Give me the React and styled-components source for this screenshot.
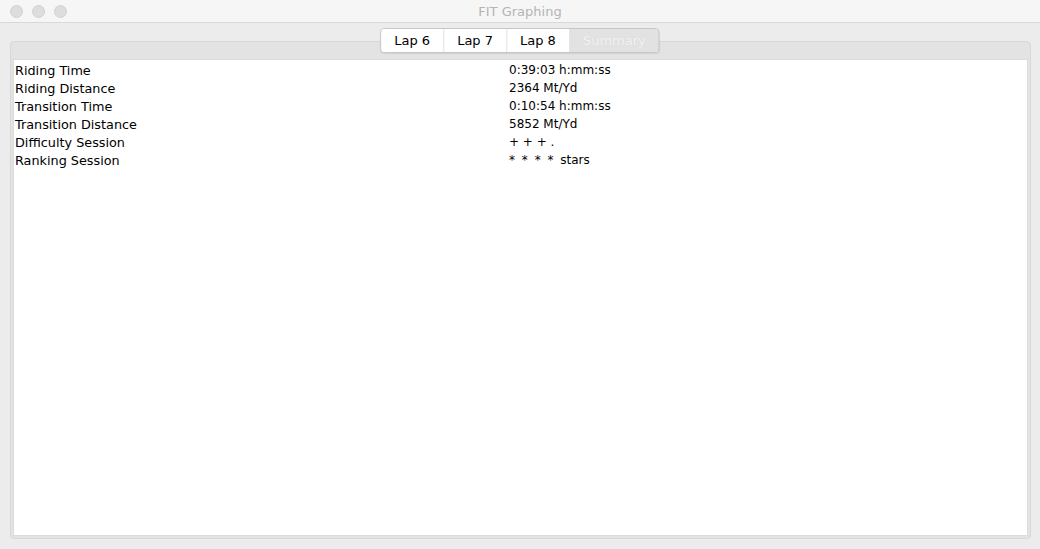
import React, { useState } from "react";
import styled, { createGlobalStyle } from "styled-components";

const GlobalStyle = createGlobalStyle`
	html, body {
		margin: 0;
		padding: 0;
		background: #ececec;
	}
	body {
		font-family: "DejaVu Sans", "Liberation Sans", sans-serif;
	}
`;

const rows = [
	["Riding Time", "0:39:03 h:mm:ss"],
	["Riding Distance", "2364 Mt/Yd"],
	["Transition Time", "0:10:54 h:mm:ss"],
	["Transition Distance", "5852 Mt/Yd"],
	["Difficulty Session", "+ + + ."],
	["Ranking Session", "* * * * stars"],
];

const tabs = ["Lap 6", "Lap 7", "Lap 8", "Summary"];

const App = () => {
	const [activeTab, setActiveTab] = useState(3);

	return (
		<>
			<GlobalStyle />
			<Window>
				<TitleBar>
					<Lights>
						<Light />
						<Light />
						<Light />
					</Lights>
					<Title>FIT Graphing</Title>
				</TitleBar>
				<Body>
					<TabStrip>
						{tabs.map((t, i) => (
							<Tab
								key={t}
								$active={activeTab === i}
								onClick={() => setActiveTab(i)}
							>
								{t}
							</Tab>
						))}
					</TabStrip>
					<Pane>
						<PaneHead />
						<Content>
							{rows.map(([label, value]) => (
								<Row key={label}>
									<Label>{label}</Label>
									<Value $stars={value.startsWith("*")}>{value}</Value>
								</Row>
							))}
						</Content>
					</Pane>
				</Body>
			</Window>
		</>
	);
};

const Window = styled.div`
	width: 1040px;
	height: 549px;
	display: flex;
	flex-direction: column;
	background: #ececec;
	overflow: hidden;
`;

const TitleBar = styled.div`
	height: 23px;
	flex-shrink: 0;
	position: relative;
	display: flex;
	align-items: center;
	background: #f6f6f6;
	border-bottom: 1px solid #d9d9d9;
	box-sizing: border-box;
`;

const Lights = styled.div`
	display: flex;
	gap: 9px;
	padding-left: 10px;
	padding-top: 1px;
`;

const Light = styled.div`
	width: 13px;
	height: 13px;
	border-radius: 50%;
	background: #dddddd;
	border: 1px solid #d2d2d2;
	box-sizing: border-box;
`;

const Title = styled.div`
	position: absolute;
	left: 0;
	right: 0;
	text-align: center;
	font-size: 13px;
	color: #b4b4b4;
`;

const Body = styled.div`
	flex: 1;
	position: relative;
	padding: 18px 9px 10px 10px;
	display: flex;
	flex-direction: column;
`;

const TabStrip = styled.div`
	position: absolute;
	top: 5px;
	left: 50%;
	transform: translateX(-50%);
	display: flex;
	height: 23px;
	border: 1px solid #c6c6c6;
	border-radius: 4px;
	background: #ffffff;
	box-shadow: 0 1px 1px rgba(0, 0, 0, 0.08);
	overflow: hidden;
	z-index: 1;
`;

const Tab = styled.div`
	display: flex;
	align-items: center;
	justify-content: center;
	padding: 0 13px;
	font-size: 13px;
	cursor: pointer;
	color: ${(p) => (p.$active ? "#f4f4f4" : "#000000")};
	background: ${(p) => (p.$active ? "#e2e2e2" : "#ffffff")};
	border-left: 1px solid #e2e2e2;
	&:first-child {
		border-left: 0;
	}
	text-shadow: ${(p) => (p.$active ? "0 0 1px #cfcfcf" : "none")};
`;

const Pane = styled.div`
	flex: 1;
	display: flex;
	flex-direction: column;
	border: 1px solid #d8d8d8;
	border-radius: 4px;
	background: #e3e3e3;
	padding: 0 2px 2px 2px;
`;

const PaneHead = styled.div`
	height: 17px;
	flex-shrink: 0;
`;

const Content = styled.div`
	flex: 1;
	background: #ffffff;
	border: 1px solid #dcdcdc;
	padding-top: 1px;
`;

const Row = styled.div`
	display: flex;
	height: 18px;
	align-items: center;
	color: #000;
`;

const Label = styled.div`
	width: 494px;
	padding-left: 1px;
	font-size: 12.8px;
`;

const Value = styled.div`
	font-size: 12px;
	word-spacing: ${(p) => (p.$stars ? "3px" : "0")};
`;

export default App;
